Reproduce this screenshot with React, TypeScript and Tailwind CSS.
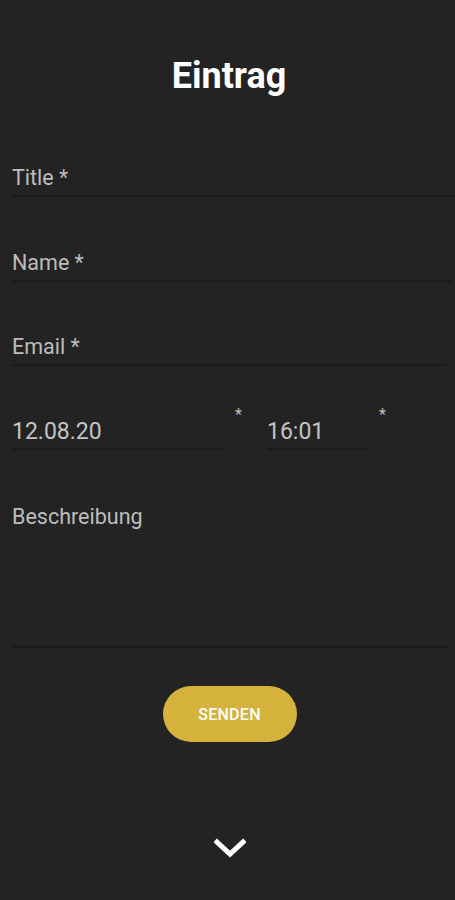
import React from "react";

export default function App() {
  const font = { fontFamily: "Roboto, 'Noto Sans', sans-serif" };
  return (
    <div
      className="w-[455px] h-[900px] bg-[#232323] flex flex-col overflow-hidden"
      style={font}
    >
      <div className="h-[112px] flex justify-center pt-[54px] pl-[3px]">
        <h1 className="text-[36px] leading-[44px] font-bold text-white">Eintrag</h1>
      </div>

      <div className="ml-3 h-[85px] border-b-2 border-[#1b1b1b] flex items-end pb-[4px]">
        <span className="text-[21.5px] leading-[26px] text-[#bdbdbd]">Title *</span>
      </div>
      <div className="ml-3 mr-1 h-[85px] border-b-2 border-[#1b1b1b] flex items-end pb-[4px]">
        <span className="text-[21.5px] leading-[26px] text-[#bdbdbd]">Name *</span>
      </div>
      <div className="ml-3 mr-2 h-[84px] border-b-2 border-[#1b1b1b] flex items-end pb-[4px]">
        <span className="text-[21.5px] leading-[26px] text-[#bdbdbd]">Email *</span>
      </div>

      <div className="h-[84px] flex items-end pl-3">
        <div className="w-[211px] h-[50px] border-b-2 border-[#1b1b1b] flex items-end pb-[2px]">
          <span className="text-[23px] leading-[28px] text-[#c4c4c4]">12.08.20</span>
        </div>
        <div className="w-[44px] h-[50px] pl-[12px] pt-[7px] text-[16px] leading-none text-[#bdbdbd]">*</div>
        <div className="w-[99px] h-[50px] border-b-2 border-[#1b1b1b] flex items-end pb-[2px]">
          <span className="text-[23px] leading-[28px] text-[#c4c4c4]">16:01</span>
        </div>
        <div className="w-[40px] h-[50px] pl-[13px] pt-[7px] text-[16px] leading-none text-[#bdbdbd]">*</div>
      </div>

      <div className="mt-[37px] ml-[10px] h-[161px] flex flex-col">
        <div className="h-[2px] bg-[#1e1e1e]" />
        <div className="flex-1 pl-[2px] pt-[15px]">
          <span className="text-[21.5px] leading-[26px] text-[#bdbdbd]">Beschreibung</span>
        </div>
        <div className="h-[2px] bg-[#1a1a1a] ml-[2px] mr-[7px]" />
      </div>

      <div className="flex justify-center mt-[38px]">
        <button className="w-[134px] h-[56px] rounded-full bg-[#d4b23b] text-white text-[16px] font-medium tracking-[0.3px] ml-[4px] pt-[2px]">
          SENDEN
        </button>
      </div>

      <div className="flex justify-center mt-[96px] ml-[4px]">
        <svg width="32" height="20" viewBox="0 0 32 20">
          <path d="M3 4 L16 16 L29 4" fill="none" stroke="white" strokeWidth="5" strokeLinecap="square" strokeLinejoin="miter" />
        </svg>
      </div>
    </div>
  );
}
